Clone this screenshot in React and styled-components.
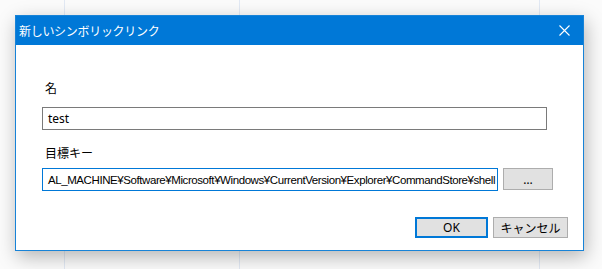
import React from "react"
import styled, { createGlobalStyle } from "styled-components"

const GlobalStyle = createGlobalStyle`
  html, body {
    margin: 0;
    padding: 0;
  }
  body {
    width: 602px;
    height: 269px;
    overflow: hidden;
    background-color: #fbfbfb;
    background-image:
      linear-gradient(#e2e9f4, #e2e9f4),
      linear-gradient(#e2e9f4, #e2e9f4),
      linear-gradient(#e2e9f4, #e2e9f4);
    background-size: 1px 100%;
    background-position: 64px 0, 239px 0, 539px 0;
    background-repeat: no-repeat;
    font-family: "Noto Sans", "Noto Sans CJK JP", sans-serif;
  }
`

const Page = styled.div`
  padding: 15px 0 0 15px;
`

const Dialog = styled.div`
  width: 567px;
  border: 1px solid #1883d7;
  background: #fff;
  box-shadow: 2px 6px 18px rgba(0, 0, 0, 0.28);
  display: flex;
  flex-direction: column;
`

const TitleBar = styled.div`
  height: 29px;
  background: #0078d7;
  display: flex;
  align-items: center;
  justify-content: space-between;
  padding: 0 13px 0 3px;
  color: #fff;
  font-family: "Noto Sans CJK JP", sans-serif;
  font-size: 12px;
`

const Title = styled.span`
  letter-spacing: -0.3px;
`

const CloseIcon = styled.svg`
  width: 11px;
  height: 11px;
  display: block;
`

const Body = styled.div`
  padding: 35px 15px 12px 26px;
  display: flex;
  flex-direction: column;
`

const Label = styled.div`
  font-family: "Noto Sans CJK JP", sans-serif;
  font-size: 12px;
  line-height: 15px;
  height: 15px;
  color: #000;
  padding-left: 3px;
  margin-top: ${p => p.$top || 0}px;
  margin-bottom: ${p => p.$gap}px;
`

const Field = styled.div`
  box-sizing: border-box;
  width: ${p => p.$width}px;
  height: 23px;
  border: 1px solid ${p => (p.$focused ? "#0078d7" : "#7a7a7a")};
  display: flex;
  align-items: center;
  padding-left: 5px;
  font-family: ${p => (p.$narrow ? `"Liberation Sans"` : `"Noto Sans"`)}, "Noto Sans CJK JP", sans-serif;
  font-size: ${p => (p.$narrow ? "11.5px" : "12px")};
  letter-spacing: ${p => (p.$narrow ? "-0.42px" : "0")};
  color: #000;
  white-space: nowrap;
  overflow: hidden;
`

const Row = styled.div`
  display: flex;
  gap: 5px;
`

const Button = styled.div`
  box-sizing: border-box;
  width: ${p => p.$width}px;
  height: ${p => p.$height || 21}px;
  background: #e1e1e1;
  border: ${p => (p.$primary ? "2px solid #0078d7" : "1px solid #adadad")};
  display: flex;
  align-items: center;
  justify-content: center;
  font-family: "Noto Sans", "Noto Sans CJK JP", sans-serif;
  font-size: 12px;
  color: #000;
`

const Footer = styled.div`
  display: flex;
  justify-content: flex-end;
  gap: 5px;
  margin-top: 26px;
`

export default function App() {
  return (
    <>
      <GlobalStyle />
      <Page>
        <Dialog>
          <TitleBar>
            <Title>新しいシンボリックリンク</Title>
            <CloseIcon viewBox="0 0 11 11">
              <path d="M0.5 0.5 L10.5 10.5 M10.5 0.5 L0.5 10.5" stroke="#fff" strokeWidth="1.1" />
            </CloseIcon>
          </TitleBar>
          <Body>
            <Label $gap={12}>名</Label>
            <Field $width={505}>test</Field>
            <Label $top={15} $gap={8}>目標キー</Label>
            <Row>
              <Field $width={456} $focused $narrow>
                AL_MACHINE¥Software¥Microsoft¥Windows¥CurrentVersion¥Explorer¥CommandStore¥shell
              </Field>
              <Button $width={50} $height={22}>…</Button>
            </Row>
            <Footer>
              <Button $width={73} $primary>OK</Button>
              <Button $width={75}>キャンセル</Button>
            </Footer>
          </Body>
        </Dialog>
      </Page>
    </>
  )
}
